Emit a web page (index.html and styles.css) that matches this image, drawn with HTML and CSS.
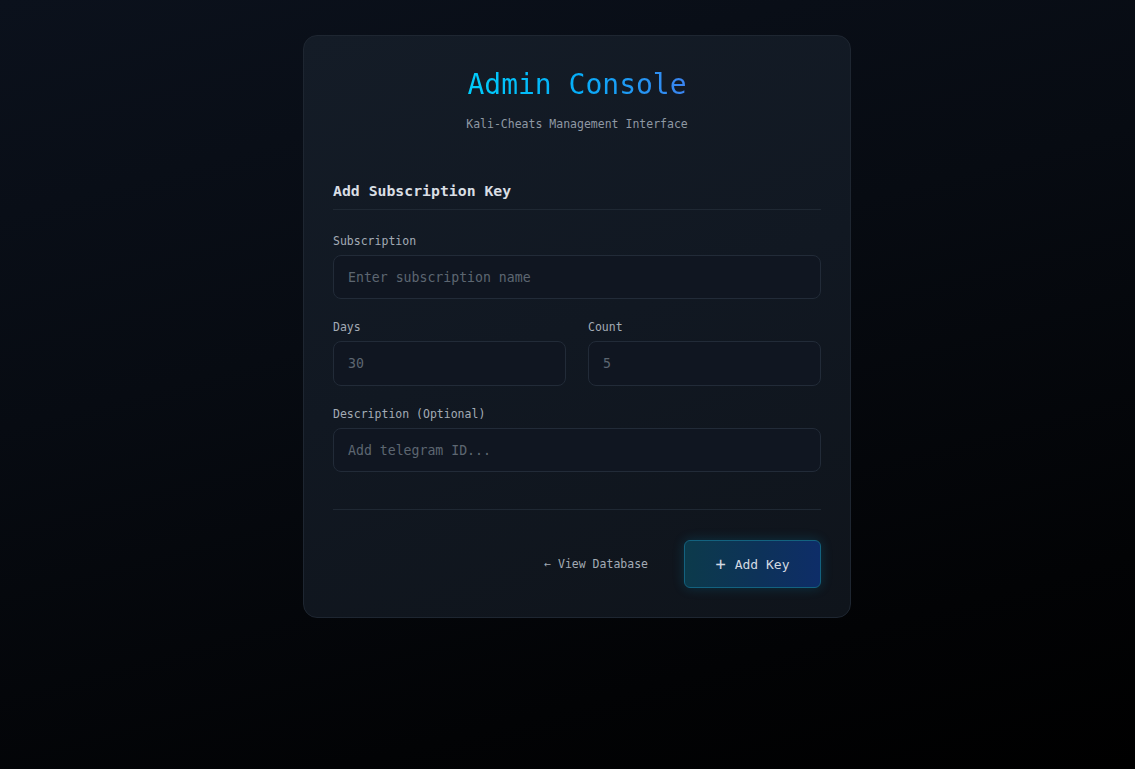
FILE: index.html
```html
<!DOCTYPE html>
<html lang="en">
<head>
<meta charset="utf-8">
<title>Admin Console</title>
<link rel="stylesheet" href="styles.css">
</head>
<body>
<main class="page">
  <section class="card">
    <header class="card-header">
      <h1 class="title">Admin Console</h1>
      <p class="subtitle">Kali-Cheats Management Interface</p>
    </header>
    <form class="form">
      <h2 class="section-title">Add Subscription Key</h2>
      <div class="field">
        <label class="label">Subscription</label>
        <input class="input" type="text" placeholder="Enter subscription name">
      </div>
      <div class="row">
        <div class="field">
          <label class="label">Days</label>
          <input class="input" type="text" placeholder="30">
        </div>
        <div class="field">
          <label class="label">Count</label>
          <input class="input" type="text" placeholder="5">
        </div>
      </div>
      <div class="field">
        <label class="label">Description (Optional)</label>
        <input class="input" type="text" placeholder="Add telegram ID...">
      </div>
      <div class="actions">
        <a class="link" href="#">← View Database</a>
        <button class="btn" type="button"><span class="plus">+</span>Add Key</button>
      </div>
    </form>
  </section>
</main>
</body>
</html>
```
FILE: styles.css
```css
* { box-sizing: border-box; }
html, body { height: 100%; }
body {
  margin: 0;
  font-family: "DejaVu Sans Mono", "Liberation Mono", monospace;
  background: linear-gradient(165deg, #0b111c 0%, #070b12 40%, #020305 80%, #000 100%);
  color: #c9d1d9;
}
.page {
  padding: 35px 0 0 19px;
  display: flex;
  justify-content: center;
}
.card {
  width: 548px;
  padding: 32px 29px 29px;
  border: 1px solid #1e2631;
  border-radius: 14px;
  background: linear-gradient(160deg, #141c27 0%, #111822 50%, #0f141b 100%);
}
.card-header { text-align: center; }
.title {
  margin: 0;
  font-size: 28px;
  line-height: 34px;
  font-weight: normal;
  display: inline-block;
  background: linear-gradient(90deg, #00cdfb 0%, #06aef9 50%, #3b84f0 100%);
  -webkit-background-clip: text;
  background-clip: text;
  color: transparent;
}
.subtitle {
  margin: 15px 0 0;
  font-size: 11.5px;
  line-height: 14px;
  color: #8f98a3;
}
.form { margin-top: 51px; }
.section-title {
  margin: 0 0 24px;
  font-size: 14.8px;
  line-height: 17px;
  font-weight: bold;
  color: #d9dee4;
  padding-bottom: 10px;
  border-bottom: 1px solid #1f2833;
}
.field { margin-bottom: 21px; flex: 1; }
.label {
  display: block;
  font-size: 11.5px;
  line-height: 14px;
  color: #a3abb5;
  margin-bottom: 7px;
}
.input {
  display: block;
  width: 100%;
  height: 44px;
  padding: 0 14px;
  border: 1px solid #222b38;
  border-radius: 8px;
  background: #101621;
  font-family: inherit;
  font-size: 13.2px;
  color: #c9d1d9;
  outline: none;
}
.input::placeholder { color: #5d6671; }
.row { display: flex; gap: 22px; }
.row .input { height: 45px; }
.actions {
  margin-top: 37px;
  padding-top: 30px;
  border-top: 1px solid #1f2833;
  display: flex;
  justify-content: flex-end;
  align-items: center;
  gap: 36px;
}
.link {
  font-size: 11.5px;
  color: #a3abb5;
  text-decoration: none;
}
.btn {
  width: 137px;
  height: 48px;
  border: 1px solid #13627f;
  border-radius: 6px;
  background: linear-gradient(90deg, #0c3a4b 0%, #0d3259 55%, #0e2d68 100%);
  box-shadow: 0 0 12px rgba(0, 160, 210, 0.22);
  font-family: inherit;
  font-size: 13px;
  color: #d3dae2;
  display: flex;
  align-items: center;
  justify-content: center;
  gap: 9px;
  cursor: pointer;
}
.plus { font-size: 17px; line-height: 1; font-weight: 300; }
```
